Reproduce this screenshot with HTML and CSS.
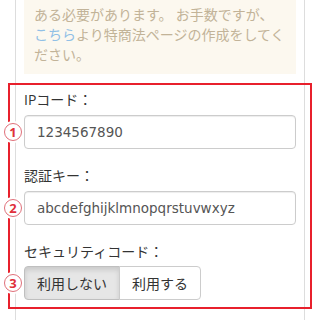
FILE: index.html
```html
<!DOCTYPE html>
<html lang="ja">
<head>
<meta charset="utf-8">
<link rel="stylesheet" href="styles.css">
</head>
<body>
<div class="panel">
  <div class="notice">ある必要があります。 お手数ですが、<br><a class="link" href="#">こちら</a>より特商法ページの作成をしてく<br>ださい。</div>
  <div class="form">
    <div class="frame"></div>
    <div class="field">
      <div class="label">IPコード：</div>
      <div class="row">
        <span class="num">1</span>
        <input class="input" type="text" value="1234567890">
      </div>
    </div>
    <div class="field">
      <div class="label">認証キー：</div>
      <div class="row">
        <span class="num">2</span>
        <input class="input" type="text" value="abcdefghijklmnopqrstuvwxyz">
      </div>
    </div>
    <div class="field last">
      <div class="label label-tight">セキュリティコード：</div>
      <div class="row">
        <span class="num">3</span>
        <div class="btn-group">
          <button class="btn active" type="button">利用しない</button>
          <button class="btn" type="button">利用する</button>
        </div>
      </div>
    </div>
  </div>
</div>
</body>
</html>
```

FILE: styles.css
```css
* { box-sizing: border-box; }
html, body {
  margin: 0;
  padding: 0;
  background: #fff;
  overflow: hidden;
  height: 320px;
}
body {
  font-family: "Open Sans", "Noto Sans CJK JP", sans-serif;
  font-size: 14px;
  line-height: 20px;
  color: #333;
}
.panel {
  margin: 0 15px;
  border-left: 1px solid #dddddd;
  border-right: 1px solid #dddddd;
  padding: 0 8px 11px;
}
.notice {
  margin-top: -6px;
  background: #fcf8ef;
  color: #c2b398;
  padding: 10px;
  line-height: 20px;
  white-space: nowrap;
  font-family: "Noto Sans CJK JP", sans-serif;
}
.link {
  color: #91c0e6;
  text-decoration: none;
}
.form {
  position: relative;
  padding: 16px 0 9px;
}
.frame {
  position: absolute;
  top: 9px;
  bottom: 0;
  left: -16px;
  right: -16px;
  border: 2px solid #e8202c;
  pointer-events: none;
}
.field { margin-bottom: 17px; }
.field.last { margin-bottom: 0; }
.label {
  height: 20px;
  margin-bottom: 5px;
  color: #333;
}
.label-tight { margin-bottom: 4px; }
.row {
  position: relative;
}
.num {
  position: absolute;
  left: -20px;
  top: 50%;
  margin-top: -9px;
  width: 18px;
  height: 18px;
  border-radius: 50%;
  border: 1px solid #e0707a;
  background: #fff;
  box-shadow: 0 0 0 2px #fff;
  color: #e0303c;
  font-family: "Open Sans", sans-serif;
  font-weight: 700;
  font-size: 13px;
  line-height: 16px;
  text-align: center;
  z-index: 2;
}
.input {
  display: block;
  width: 100%;
  height: 34px;
  padding: 0 12px;
  border: 1px solid #cccccc;
  border-radius: 4px;
  box-shadow: inset 0 1px 1px rgba(0,0,0,0.075);
  font-family: "DejaVu Sans", "Noto Sans CJK JP", sans-serif;
  font-size: 13.5px;
  color: #555;
  background: #fff;
  outline: none;
}
.btn-group {
  display: flex;
}
.btn {
  height: 34px;
  padding: 0 12px;
  border: 1px solid #cccccc;
  background: #fff;
  color: #333;
  font-family: "Noto Sans CJK JP", sans-serif;
  font-size: 14px;
  line-height: 20px;
  border-radius: 0 4px 4px 0;
  margin-left: -1px;
}
.btn.active {
  background: #e6e6e6;
  border-color: #bfbfbf;
  box-shadow: inset 0 3px 5px rgba(0,0,0,0.125);
  border-radius: 4px 0 0 4px;
  margin-left: 0;
}
```
